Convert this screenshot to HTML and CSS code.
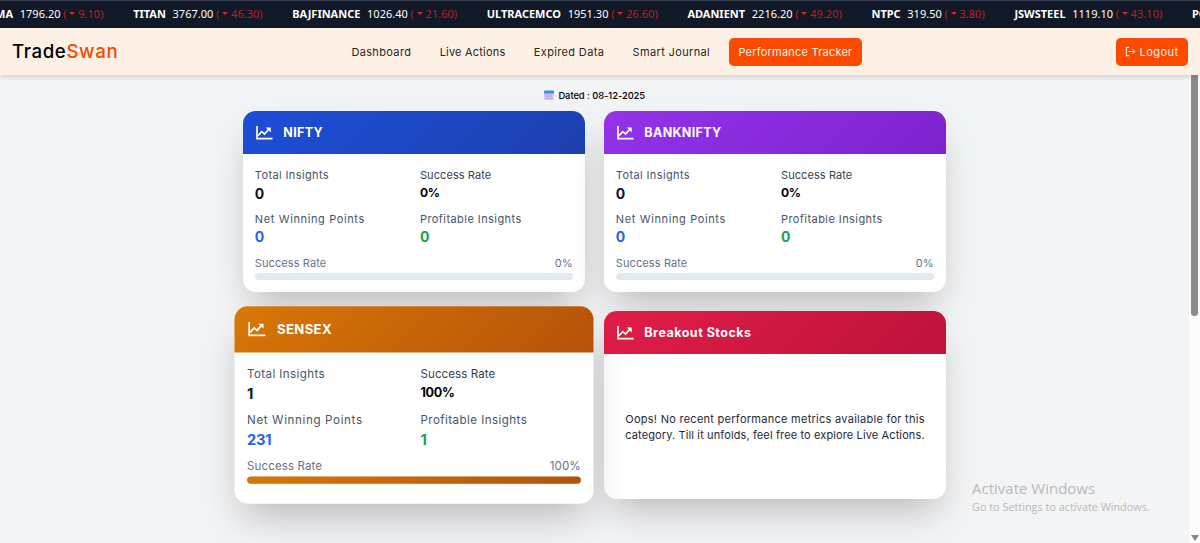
FILE: index.html
```html
<!DOCTYPE html>
<html lang="en">
<head>
	<meta charset="UTF-8">
	<title>TradeSwan</title>
	<link rel="stylesheet" href="styles.css">
</head>
<body>
	<svg class="sprite" width="0" height="0">
		<symbol id="chart" viewBox="0 0 17 14">
			<path d="M1 0v12.700H16.500" fill="none" stroke="currentColor" stroke-width="1.700"/>
			<path d="M2 9.800L5.700 5.600 8.600 8 13 3" fill="none" stroke="currentColor" stroke-width="1.700"/>
			<path d="M9.800 1.600H14.700V6.500z" fill="currentColor"/>
		</symbol>
	</svg>
	<div class="ticker">
		<div class="tick"><b>SUNPHARMA</b><span>1796.20</span><i>( <em></em> 9.10)</i></div>
		<div class="tick"><b>TITAN</b><span>3767.00</span><i>( <em></em> 46.30)</i></div>
		<div class="tick"><b>BAJFINANCE</b><span>1026.40</span><i>( <em></em> 21.60)</i></div>
		<div class="tick"><b>ULTRACEMCO</b><span>1951.30</span><i>( <em></em> 26.60)</i></div>
		<div class="tick"><b>ADANIENT</b><span>2216.20</span><i>( <em></em> 49.20)</i></div>
		<div class="tick"><b>NTPC</b><span>319.50</span><i>( <em></em> 3.80)</i></div>
		<div class="tick"><b>JSWSTEEL</b><span>1119.10</span><i>( <em></em> 43.10)</i></div>
		<div class="tick"><b>POWERGRID</b></div>
	</div>
	<header class="navbar">
		<div class="logo">Trade<span>Swan</span></div>
		<nav class="menu">
			<a>Dashboard</a>
			<a class="live">Live Actions</a>
			<a>Expired Data</a>
			<a>Smart Journal</a>
			<a class="active">Performance Tracker</a>
		</nav>
		<a class="logout"><svg width="11" height="11" viewBox="0 0 24 24" fill="none" stroke="currentColor" stroke-width="2.2"><path d="M9 3H3v18h6M8 12h13M16 7l5 5-5 5"/></svg><span>Logout</span></a>
	</header>
	<div class="page">
		<main class="content">
			<div class="dated">
				<svg width="10" height="10" viewBox="0 0 10 10"><rect y="1" width="10" height="9" rx="1" fill="#d3c4ec"/><path d="M0 3.500V1.500Q0 .5 1 .5h8q1 0 1 1v2z" fill="#3d8fe8"/><path d="M2 5h6M2 6.700h6M2 8.400h6" stroke="#a88fd0" stroke-width=".8" stroke-dasharray="1 .6"/></svg>
				<span>Dated : 08-12-2025</span>
			</div>
			<div class="cards">
				<section class="card">
					<h2 class="blue"><svg><use href="#chart"/></svg><span>NIFTY</span></h2>
					<div class="stats">
						<div><p class="total">Total Insights</p><strong>0</strong></div>
						<div><p class="dark">Success Rate</p><strong class="rate">0%</strong></div>
						<div><p class="net">Net Winning Points</p><strong class="points">0</strong></div>
						<div><p>Profitable Insights</p><strong class="profit">0</strong></div>
					</div>
					<div class="progress"><span>Success Rate</span><span>0%</span></div>
					<div class="bar"></div>
				</section>
				<section class="card">
					<h2 class="purple"><svg><use href="#chart"/></svg><span>BANKNIFTY</span></h2>
					<div class="stats">
						<div><p class="total">Total Insights</p><strong>0</strong></div>
						<div><p class="dark">Success Rate</p><strong class="rate">0%</strong></div>
						<div><p class="net">Net Winning Points</p><strong class="points">0</strong></div>
						<div><p>Profitable Insights</p><strong class="profit">0</strong></div>
					</div>
					<div class="progress"><span>Success Rate</span><span>0%</span></div>
					<div class="bar"></div>
				</section>
				<section class="card zoomed">
					<h2 class="amber"><svg><use href="#chart"/></svg><span>SENSEX</span></h2>
					<div class="stats">
						<div><p class="total">Total Insights</p><strong>1</strong></div>
						<div><p class="dark">Success Rate</p><strong class="rate">100%</strong></div>
						<div><p class="net">Net Winning Points</p><strong class="points">231</strong></div>
						<div><p>Profitable Insights</p><strong class="profit">1</strong></div>
					</div>
					<div class="progress"><span>Success Rate</span><span>100%</span></div>
					<div class="bar"><div class="fill amber" style="width:100%"></div></div>
				</section>
				<section class="card">
					<h2 class="red"><svg><use href="#chart"/></svg><span>Breakout Stocks</span></h2>
					<div class="empty"><span class="first">Oops! No recent performance metrics available for this</span><span>category. Till it unfolds, feel free to explore Live Actions.</span></div>
				</section>
			</div>
		</main>
		<div class="scroll">
			<div class="thumb"></div>
			<div class="arrow"></div>
		</div>
	</div>
	<div class="watermark">
		<div class="big">Activate Windows</div>
		<div class="small">Go to Settings to activate Windows.</div>
	</div>
</body>
</html>
```
FILE: styles.css
```css
* {
	box-sizing: border-box;
}
body {
	margin: 0;
	height: 543px;
	overflow: hidden;
	display: flex;
	flex-direction: column;
	font-family: Inter, "Open Sans", sans-serif;
	font-size: 11px;
	background-color: #f3f4f6;
}
.sprite {
	position: absolute;
}
.ticker {
	flex: none;
	display: flex;
	gap: 29.700px;
	height: 28px;
	border-top: 1px solid #374151;
	overflow: hidden;
	line-height: 26px;
	font-family: "Noto Sans", sans-serif;
	color: white;
	background-color: #111827;
}
.tick {
	flex: none;
	display: flex;
	white-space: nowrap;
}
.tick:first-child {
	margin-left: -58.300px;
}
.tick b {
	margin-right: 6.700px;
}
.tick i {
	margin-left: 2.800px;
	font-style: normal;
	color: #b3202e;
}
.tick em {
	display: inline-block;
	vertical-align: 3px;
	border: 3px solid transparent;
	border-top: 3px solid #dc2626;
	border-bottom: 0;
}
.navbar {
	flex: none;
	position: relative;
	z-index: 1;
	display: flex;
	align-items: center;
	height: 47px;
	padding: 0 12px;
	background-color: #fdf1e6;
	box-shadow: 0 2px 5px rgba(0,0,0,0.15);
}
.logo {
	width: 330px;
	font-size: 18.700px;
	font-weight: 550;
	letter-spacing: 0.600px;
	color: black;
}
.logo span {
	color: #f54a00;
}
.menu {
	display: flex;
	gap: 9.600px;
}
.menu a {
	padding: 0 9.400px;
	line-height: 28px;
	border-radius: 4.700px;
	letter-spacing: 0.350px;
	color: #292524;
}
.menu .live {
	letter-spacing: 0.200px;
}
.menu .active {
	letter-spacing: 0.220px;
}
.menu .active, .logout {
	color: #fff3ea;
	background-color: #fb4b00;
}
.logout {
	display: flex;
	align-items: center;
	gap: 3px;
	margin-left: auto;
	padding: 0 9.400px;
	line-height: 28px;
	border-radius: 4.700px;
	letter-spacing: 0.480px;
}
.page {
	flex: 1;
	display: flex;
	min-height: 0;
}
.content {
	flex: 1;
	padding-top: 12px;
}
.dated {
	display: flex;
	align-items: center;
	justify-content: center;
	gap: 4.500px;
	height: 16px;
	margin-bottom: 7.900px;
	font-size: 9.400px;
	font-weight: 500;
	letter-spacing: -0.060px;
}
.cards {
	display: grid;
	grid-template-columns: 1fr 1fr;
	grid-template-rows: 181.300px 188px;
	gap: 18.700px;
	width: 703.400px;
	margin: 0 auto;
}
.card {
	display: flex;
	flex-direction: column;
	border-radius: 12.500px;
	background-color: white;
	box-shadow: 0 19px 39px -9px rgba(0,0,0,0.25);
}
.zoomed {
	transform: scale(1.05);
}
.card h2 {
	display: flex;
	align-items: center;
	gap: 10.500px;
	height: 43.500px;
	margin: 0;
	padding: 0 13px;
	border-radius: 12.500px 12.500px 0 0;
	font-size: 12.500px;
	font-weight: 700;
	letter-spacing: 0.350px;
	color: white;
}
.card .red {
	letter-spacing: 0.500px;
}
.card h2 svg {
	width: 17px;
	height: 14px;
}
.blue {
	background: linear-gradient(135deg, #1d4ed8, #1e40af);
}
.purple {
	background: linear-gradient(135deg, #9333ea, #7e22ce);
}
.amber {
	background: linear-gradient(135deg, #d97706, #b45309);
}
.red {
	background: linear-gradient(135deg, #e11d48, #be123c);
}
.stats {
	display: grid;
	grid-template-columns: 1fr 1fr;
	gap: 6.300px 12.500px;
	padding: 12.700px 12.500px 0 12px;
}
.stats p {
	margin: 0;
	padding-top: 1px;
	line-height: 14.600px;
	letter-spacing: 0.430px;
	color: #475569;
}
.stats .total {
	letter-spacing: 0.380px;
}
.stats .net {
	letter-spacing: 0.620px;
}
.stats .dark {
	letter-spacing: 0.080px;
	color: #374151;
}
.stats strong {
	display: block;
	line-height: 21.900px;
	font-size: 14px;
	letter-spacing: -0.300px;
	color: #0f172a;
}
.stats .rate {
	line-height: 19.200px;
	font-size: 12px;
	color: black;
}
.stats .points {
	color: #2563eb;
}
.stats .profit {
	color: #16a34a;
}
.progress {
	display: flex;
	justify-content: space-between;
	padding: 7.300px 12.500px 3.100px 12px;
	line-height: 14.600px;
	letter-spacing: 0.100px;
	color: #64748b;
}
.bar {
	height: 6.250px;
	margin: 0 12.500px 0 12px;
	border-radius: 4px;
	background-color: #e2e8f0;
}
.fill {
	height: 100%;
	border-radius: 4px;
}
.empty {
	flex: 1;
	display: flex;
	flex-direction: column;
	align-items: center;
	justify-content: center;
	padding-top: 2px;
	line-height: 15.600px;
	letter-spacing: 0.120px;
	color: #1f2937;
}
.empty .first {
	letter-spacing: 0.270px;
}
.scroll {
	display: flex;
	flex-direction: column;
	justify-content: space-between;
	align-items: center;
	width: 11px;
	padding-bottom: 2px;
	background-color: #fcfcfc;
}
.thumb {
	width: 7px;
	height: 241px;
	border-radius: 0 0 4px 4px;
	background-color: #8b8b8b;
}
.arrow {
	border: 4px solid transparent;
	border-top: 6px solid #858585;
	border-bottom: 0;
}
/* system notice lies over the page */
.watermark {
	position: absolute;
	left: 972px;
	top: 478px;
	font-family: "Open Sans", sans-serif;
	color: #b9babc;
}
.big {
	line-height: 20px;
	font-size: 15px;
}
.small {
	line-height: 17px;
	font-size: 10.850px;
}
```
